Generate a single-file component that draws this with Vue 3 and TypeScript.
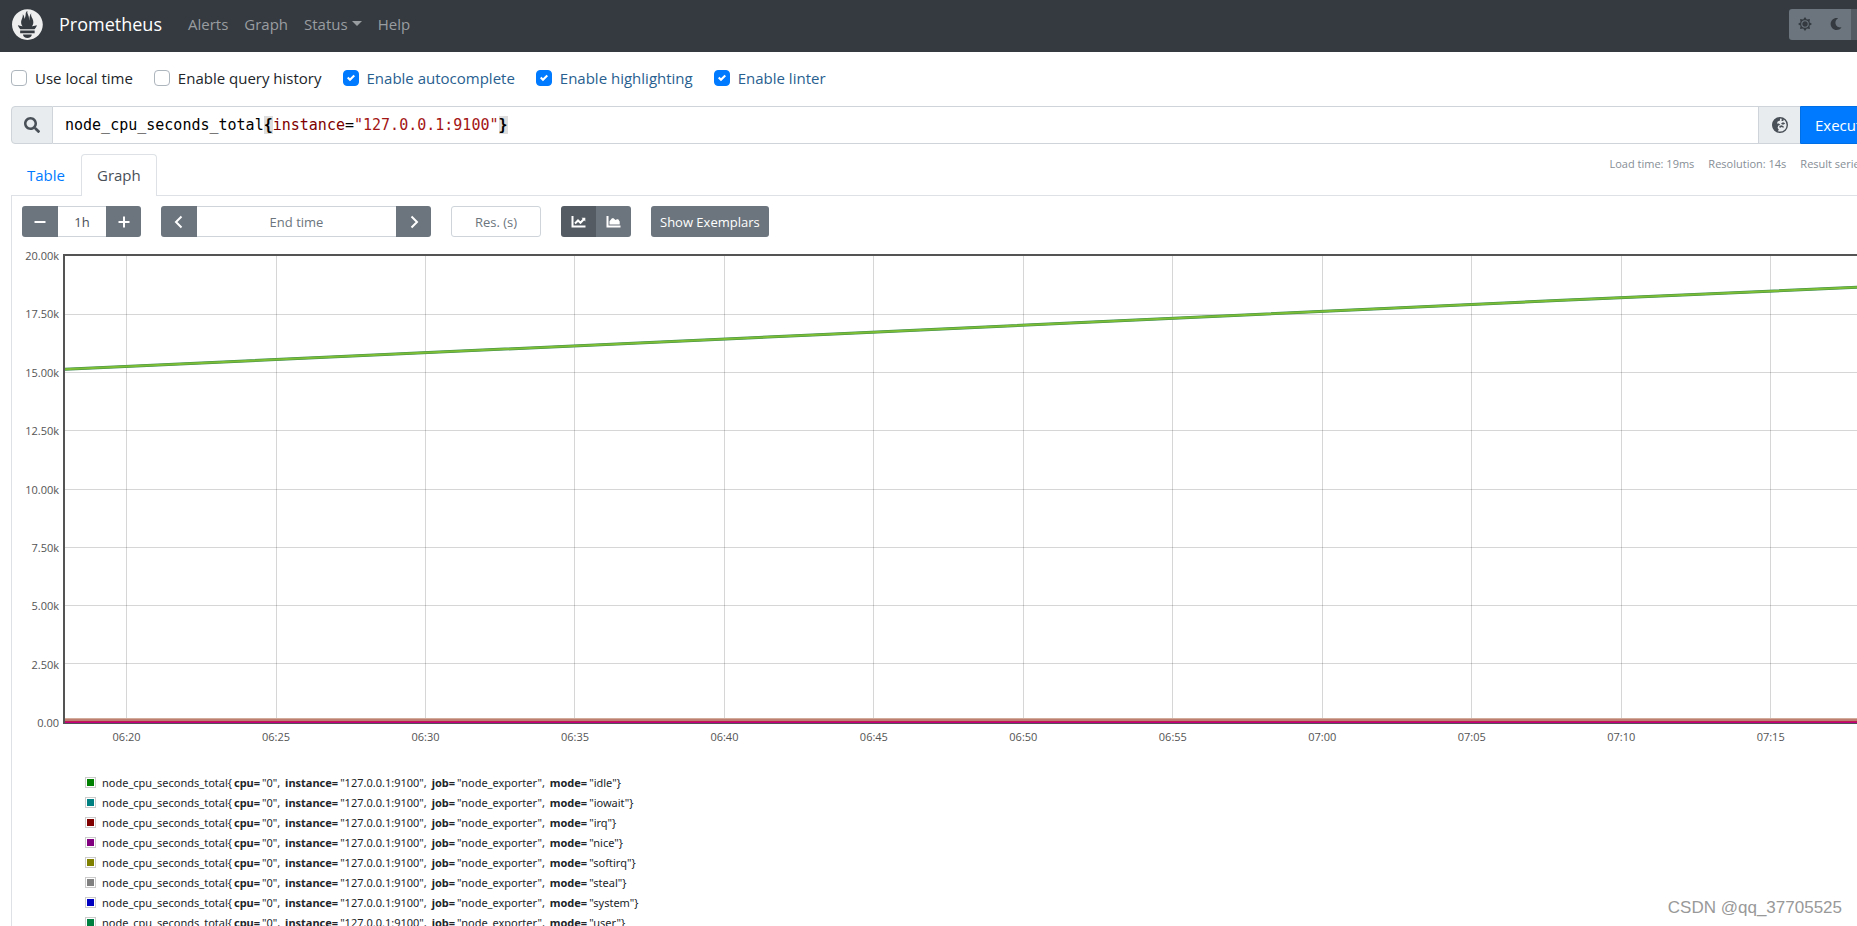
<script setup lang="ts">
import { computed, ref } from 'vue'

interface Option {
  id: string
  label: string
  checked: boolean
}
interface Series {
  mode: string
  color: string
}

const links = ['Alerts', 'Graph', 'Status', 'Help']

const options = ref<Option[]>([
  { id: 'local-time', label: 'Use local time', checked: false },
  { id: 'history', label: 'Enable query history', checked: false },
  { id: 'autocomplete', label: 'Enable autocomplete', checked: true },
  { id: 'highlighting', label: 'Enable highlighting', checked: true },
  { id: 'linter', label: 'Enable linter', checked: true },
])

const range = ref('1h')
const endTime = ref('')
const resolution = ref('')
const stats = ['Load time: 19ms', 'Resolution: 14s', 'Result series: 8']

const series: Series[] = [
  { mode: 'idle', color: '#008000' },
  { mode: 'iowait', color: '#008080' },
  { mode: 'irq', color: '#800000' },
  { mode: 'nice', color: '#800080' },
  { mode: 'softirq', color: '#808000' },
  { mode: 'steal', color: '#808080' },
  { mode: 'system', color: '#0000c0' },
  { mode: 'user', color: '#008040' },
]

// Time axis in minutes from the left edge, value axis in thousands.
const SPAN = 60.65
const FIRST_TICK = 2.06
const MAX = 20

const yTicks = Array.from({ length: 9 }, (_, i) => {
  const value = MAX - i * 2.5
  return { label: value === 0 ? '0.00' : value.toFixed(2) + 'k', pct: (i * 100) / 8 + '%' }
})
const xTicks = Array.from({ length: 12 }, (_, i) => {
  const minute = 20 + i * 5
  const hour = 6 + Math.floor(minute / 60)
  return {
    label: `0${hour}:${String(minute % 60).padStart(2, '0')}`,
    pct: ((FIRST_TICK + i * 5) / SPAN) * 100 + '%',
  }
})

const idle: [number, number][] = [
  [0, 15.14],
  [25, 16.61],
  [49.9, 18.09],
  [60, 18.66],
]
const idlePoints = computed(() =>
  idle.map(([t, v]) => `${(t / SPAN) * 1000},${((MAX - v) / MAX) * 466}`).join(' '),
)
</script>

<template>
  <div class="viewport">
    <div class="sheet">
      <nav class="navbar">
        <svg class="logo" viewBox="0 0 114 114" aria-hidden="true">
          <path
            fill="#eeeeee"
            d="M56.667,0.667C25.372,0.667,0,26.036,0,57.332c0,31.295,25.372,56.666,56.667,56.666s56.666-25.371,56.666-56.666C113.333,26.036,87.961,0.667,56.667,0.667z M56.667,106.722c-8.904,0-16.123-5.948-16.123-13.283H72.79C72.79,100.773,65.571,106.722,56.667,106.722z M83.297,89.04H30.034v-9.658h53.264V89.04z M83.106,74.411h-52.92c-0.176-0.203-0.356-0.403-0.526-0.609c-5.452-6.62-6.736-10.076-7.983-13.598c-0.021-0.116,6.611,1.355,11.314,2.413c0,0,2.42,0.56,5.958,1.205c-3.397-3.982-5.414-9.044-5.414-14.218c0-11.359,8.712-21.285,5.569-29.308c3.059,0.249,6.331,6.456,6.552,16.161c3.252-4.494,4.613-12.701,4.613-17.733c0-5.21,3.433-11.262,6.867-11.469c-3.061,5.045,0.793,9.37,4.219,20.099c1.285,4.03,1.121,10.812,2.113,15.113C63.797,33.534,65.333,20.5,71,16c-2.5,5.667,0.37,12.758,2.333,16.167c3.167,5.5,5.087,9.667,5.087,17.548c0,5.284-1.951,10.259-5.242,14.148c3.742-0.702,6.326-1.335,6.326-1.335l12.152-2.371C91.657,60.156,89.891,67.417,83.106,74.411z"
          />
        </svg>
        <a class="brand" href="#">Prometheus</a>
        <a v-for="link in links" :key="link" class="nav-link" :class="{ dropdown: link === 'Status' }" href="#">{{ link }}</a>
        <div class="themes">
          <button type="button" aria-label="Light theme">
            <svg viewBox="0 0 16 16" aria-hidden="true">
              <path fill="#343a40" d="M8 0l2.100 2.900L13.650 2.350 13.100 5.900 16 8l-2.900 2.100 .55 3.550-3.550-.55L8 16l-2.100-2.900-3.550.55L2.900 10.100 0 8l2.900-2.100L2.350 2.350 5.900 2.900z" />
              <circle cx="8" cy="8" r="3.700" fill="#343a40" stroke="#6c757d" stroke-width="1.200" />
            </svg>
          </button>
          <button type="button" aria-label="Dark theme">
            <svg viewBox="0 0 512 512" aria-hidden="true">
              <path fill="#343a40" d="M283.211 512c78.962 0 151.079-35.925 198.857-94.792 7.068-8.708-.639-21.43-11.562-19.35-124.203 23.654-238.262-71.576-238.262-196.954 0-72.222 38.662-138.635 101.498-174.394 9.686-5.512 7.25-20.197-3.756-22.23A258.156 258.156 0 0 0 283.211 0c-141.309 0-256 114.511-256 256 0 141.309 114.511 256 256 256z" />
            </svg>
          </button>
          <button type="button" class="active" aria-label="Browser theme">
            <svg viewBox="0 0 16 16" aria-hidden="true">
              <circle cx="8" cy="8" r="7" fill="none" stroke="#343a40" stroke-width="2" />
              <path fill="#343a40" d="M8 1a7 7 0 0 1 0 14z" />
            </svg>
          </button>
        </div>
      </nav>

      <main class="container">
        <div class="options">
          <div v-for="option in options" :key="option.id" class="option">
            <input :id="option.id" v-model="option.checked" type="checkbox" />
            <label :for="option.id">{{ option.label }}</label>
          </div>
        </div>

        <div class="expression">
          <span class="addon">
            <svg viewBox="0 0 512 512" aria-hidden="true">
              <path fill="#495057" d="M505 442.700L405.300 343c-4.500-4.500-10.600-7-17-7H372c27.600-35.300 44-79.700 44-128C416 93.100 322.900 0 208 0S0 93.100 0 208s93.100 208 208 208c48.300 0 92.700-16.400 128-44v16.300c0 6.400 2.500 12.500 7 17l99.700 99.700c9.400 9.400 24.600 9.400 33.900 0l28.300-28.300c9.400-9.400 9.400-24.600.1-34zM208 336c-70.700 0-128-57.200-128-128 0-70.700 57.200-128 128-128 70.700 0 128 57.200 128 128 0 70.700-57.200 128-128 128z" />
            </svg>
          </span>
          <div class="editor" role="textbox" aria-label="Expression" contenteditable="true" spellcheck="false">node_cpu_seconds_total<b>{</b><span class="label-name">instance</span>=<span class="string">"127.0.0.1:9100"</span><b>}</b></div>
          <button type="button" class="addon explorer" aria-label="Metrics explorer">
            <svg viewBox="0 0 16 16" aria-hidden="true">
              <circle cx="8" cy="8" r="7.300" fill="#e9ecef" stroke="#495057" stroke-width="1.400" />
              <path fill="#495057" d="M8 .7A7.300 7.300 0 0 0 5.500 14.900L6.800 12.600 5.600 10.900 6.200 8.800 8.300 7.700 6.900 6.500 4.900 6.600 5.700 4.600 8 3.600z" />
              <path fill="#495057" d="M9.500 2.600l1.400-.9 1 1-.8 1.200-1.500.2zM9 6.400l2-1.200 2.200 1.100-1.300 1.200-1.800.1zM7.200 8.900l2.600-.7 2.200 1.500-.6 1-1.900-.6-1.700.8z" />
            </svg>
          </button>
          <button type="button" class="execute">Execute</button>
        </div>

        <div class="tab-row">
          <div class="tabs">
            <button type="button" class="tab">Table</button>
            <button type="button" class="tab selected">Graph</button>
          </div>
          <div class="stats">
            <span v-for="stat in stats" :key="stat">{{ stat }}</span>
          </div>
        </div>

        <section class="panel">
          <form class="controls" @submit.prevent>
            <div class="group">
              <button type="button" class="dark" aria-label="Decrease range">
                <svg viewBox="0 0 14 14" aria-hidden="true"><path class="stroke" d="M1.500 7h11" /></svg>
              </button>
              <input v-model="range" class="range" aria-label="Range" />
              <button type="button" class="dark" aria-label="Increase range">
                <svg viewBox="0 0 14 14" aria-hidden="true"><path class="stroke" d="M1.500 7h11M7 1.500v11" /></svg>
              </button>
            </div>
            <div class="group">
              <button type="button" class="dark" aria-label="Earlier">
                <svg viewBox="0 0 14 14" aria-hidden="true"><path class="stroke" d="M9.500 1.500L4 7l5.500 5.500" /></svg>
              </button>
              <input v-model="endTime" class="end-time" placeholder="End time" aria-label="End time" />
              <button type="button" class="dark" aria-label="Later">
                <svg viewBox="0 0 14 14" aria-hidden="true"><path class="stroke" d="M4.500 1.500L10 7l-5.500 5.500" /></svg>
              </button>
            </div>
            <div class="group">
              <input v-model="resolution" class="resolution" placeholder="Res. (s)" aria-label="Resolution in seconds" />
            </div>
            <div class="group modes">
              <button type="button" class="dark active" aria-label="Line graph">
                <svg class="chart-icon" viewBox="0 0 15 14" aria-hidden="true">
                  <path class="stroke" d="M1.500 1v10.500h13" />
                  <path class="stroke" d="M4 8.500l3-3 2.500 2.300L13 4" />
                  <path fill="#ffffff" d="M10.500 2.800h3.800v3.800z" />
                </svg>
              </button>
              <button type="button" class="dark" aria-label="Stacked graph">
                <svg class="chart-icon" viewBox="0 0 15 14" aria-hidden="true">
                  <path class="stroke" d="M1.500 1v10.500h13" />
                  <path fill="#ffffff" d="M3.500 9.500V6.200L6 3.200h1.500L9.500 5l1.500-.8h1.200l1.500 2.300v3z" />
                </svg>
              </button>
            </div>
            <div class="group">
              <button type="button" class="dark exemplars">Show Exemplars</button>
            </div>
          </form>

          <div class="chart">
            <span v-for="tick in yTicks" :key="tick.label" class="y-label" :style="{ top: tick.pct }">{{ tick.label }}</span>
            <svg class="plot" role="img" aria-label="CPU seconds over time">
              <g class="grid">
                <line v-for="tick in yTicks.slice(1, 8)" :key="tick.label" x1="0" x2="100%" :y1="tick.pct" :y2="tick.pct" />
                <line v-for="tick in xTicks" :key="tick.label" y1="0" y2="100%" :x1="tick.pct" :x2="tick.pct" />
              </g>
              <svg width="100%" height="100%" viewBox="0 0 1000 466" preserveAspectRatio="none">
                <polyline class="idle shade" :points="idlePoints" />
                <polyline class="idle" :points="idlePoints" />
                <g shape-rendering="crispEdges">
                  <rect x="0" y="462" width="1000" height="1" fill="#d3ab9b" />
                  <rect x="0" y="463" width="1000" height="2" fill="#bd7f72" />
                  <rect x="0" y="465" width="1000" height="1" fill="#c01a50" />
                </g>
              </svg>
            </svg>
            <span v-for="tick in xTicks" :key="tick.label" class="x-label" :style="{ left: tick.pct }">{{ tick.label }}</span>
          </div>

          <ul class="legend">
            <li v-for="item in series" :key="item.mode">
              <span class="swatch"><i :style="{ background: item.color }"></i></span>
              <span>node_cpu_seconds_total{<b>cpu=</b>"0", <b>instance=</b>"127.0.0.1:9100", <b>job=</b>"node_exporter", <b>mode=</b>"{{ item.mode }}"}</span>
            </li>
          </ul>
        </section>
      </main>
    </div>
    <div class="watermark">CSDN @qq_37705525</div>
  </div>
</template>

<style>
body {
  margin: 0;
  background: #ffffff;
}
</style>

<style scoped>
* {
  box-sizing: border-box;
}
.viewport {
  position: relative;
  height: 100vh;
  overflow: hidden;
  color: #212529;
  font-family: "Open Sans", "Noto Sans", sans-serif;
  font-size: 15px;
  line-height: 24px;
}
/* The page is slightly wider than the window. */
.sheet {
  width: calc(100% + 45px);
}
button,
input {
  margin: 0;
  font: inherit;
}
button {
  display: flex;
  align-items: center;
  justify-content: center;
  cursor: pointer;
}
a {
  text-decoration: none;
}

.navbar {
  display: flex;
  align-items: center;
  height: 52px;
  padding: 0 20px 4px 12px;
  background: #343a40;
}
.logo {
  width: 31px;
  height: 31px;
  margin-right: 16px;
}
.brand {
  margin-right: 18px;
  color: #ffffff;
  font-size: 18px;
}
.nav-link {
  padding: 0 8px;
  color: #9a9da0;
}
.dropdown::after {
  content: "";
  display: inline-block;
  margin-left: 4px;
  vertical-align: 4px;
  border: 5px solid transparent;
  border-top-color: #9a9da0;
  border-bottom: 0;
}
.themes {
  display: flex;
  margin-left: auto;
}
.themes button {
  width: 31px;
  height: 31px;
  padding: 0;
  border: 0;
  background: #6c757d;
}
.themes button:first-child {
  border-radius: 3px 0 0 3px;
}
.themes button:last-child {
  border-radius: 0 3px 3px 0;
}
.themes .active {
  background: #545b62;
}
.themes svg {
  width: 14px;
  height: 14px;
}
.themes button:nth-child(2) svg {
  width: 12px;
  height: 12px;
}

.container {
  padding: 14px 11px 0;
}
.options {
  display: flex;
  gap: 21px;
}
.option {
  display: flex;
  align-items: center;
  gap: 8px;
}
.option input {
  appearance: none;
  width: 16px;
  height: 16px;
  border: 1px solid #adb5bd;
  border-radius: 4px;
  background: #ffffff;
}
.option input:checked {
  border-color: #007bff;
  background: #007bff url("data:image/svg+xml,%3csvg xmlns='http://www.w3.org/2000/svg' viewBox='0 0 8 8'%3e%3cpath fill='%23fff' d='M6.564.75l-3.59 3.612-1.538-1.55L0 4.260l2.974 2.990L8 2.193z'/%3e%3c/svg%3e") center / 8px 8px no-repeat;
}
.option input:checked + label {
  color: #286090;
}

.expression {
  display: flex;
  height: 38px;
  margin-top: 16px;
}
.addon {
  display: flex;
  align-items: center;
  justify-content: center;
  width: 42px;
  border: 1px solid #ced4da;
  border-radius: 4px 0 0 4px;
  background: #e9ecef;
}
.addon svg {
  width: 16px;
  height: 16px;
}
.editor {
  flex: 1;
  padding: 6px 12px;
  border: solid #ced4da;
  border-width: 1px 0;
  color: #000000;
  font-family: "DejaVu Sans Mono", monospace;
  white-space: pre;
  outline: 0;
}
.editor b {
  background: #dddddd;
}
.label-name {
  color: #800000;
}
.string {
  color: #a31515;
}
.explorer {
  padding: 0;
  border-right: 0;
  border-radius: 0;
}
.execute {
  justify-content: flex-start;
  width: 91px;
  padding: 0 14px;
  border: 1px solid #006fe6;
  border-radius: 0 4px 4px 0;
  background: #007bff;
  color: #ffffff;
}

.tab-row {
  display: flex;
  align-items: flex-start;
  justify-content: space-between;
  margin-top: 10px;
}
.tabs {
  display: flex;
  margin-bottom: -1px;
}
.tab {
  height: 42px;
  padding: 0 15px 2px;
  border: 1px solid transparent;
  border-bottom: 0;
  border-radius: 4px 4px 0 0;
  background: transparent;
  color: #007bff;
}
.tab.selected {
  position: relative;
  border-color: #dee2e6;
  background: #ffffff;
  color: #495057;
}
.stats {
  display: flex;
  gap: 14px;
  padding-right: 14px;
  color: #868e96;
  font-size: 11px;
  line-height: 20px;
}

.panel {
  padding: 10px;
  border: 1px solid #dee2e6;
}
.controls {
  display: flex;
  gap: 20px;
  font-size: 13px;
}
.group {
  display: flex;
  height: 31px;
}
.group input {
  min-width: 0;
  padding: 0 8px;
  border: 1px solid #ced4da;
  background: #ffffff;
  color: #495057;
  text-align: center;
}
.group input:not(:only-child) {
  border-width: 1px 0;
}
.group input::placeholder {
  color: #6c757d;
}
.group > :first-child {
  border-top-left-radius: 3px;
  border-bottom-left-radius: 3px;
}
.group > :last-child {
  border-top-right-radius: 3px;
  border-bottom-right-radius: 3px;
}
.range {
  width: 48px;
}
.end-time {
  width: 199px;
}
.resolution {
  width: 90px;
}
.dark {
  width: 35px;
  padding: 0;
  border: 0;
  background: #6c757d;
  color: #ffffff;
}
.dark:first-child {
  width: 36px;
}
.modes .dark {
  width: 35px;
}
.dark.active {
  background: #545b62;
}
.group .exemplars {
  width: auto;
  padding: 0 9px;
}
.dark svg {
  width: 14px;
  height: 14px;
}
.dark .chart-icon {
  width: 15px;
}
.stroke {
  fill: none;
  stroke: #ffffff;
  stroke-width: 2;
}

.chart {
  position: relative;
  height: 470px;
  margin: 17px 0 0 41px;
  border: 2px solid #545454;
  border-bottom: 1px solid #545454;
  box-shadow: inset 0 -1px #bf0080;
  color: #545454;
  font-size: 11px;
  line-height: 16px;
}
.plot {
  display: block;
  width: 100%;
  height: 466px;
}
.grid line {
  stroke: rgba(0, 0, 0, 0.16);
  shape-rendering: crispEdges;
}
.idle {
  fill: none;
  stroke: #7cbd35;
  stroke-width: 2;
  vector-effect: non-scaling-stroke;
}
.idle.shade {
  stroke: #3a8a4c;
  stroke-width: 3;
}
.y-label {
  position: absolute;
  right: 100%;
  margin-right: 6px;
  transform: translateY(-50%);
}
.x-label {
  position: absolute;
  top: 100%;
  margin-top: 6px;
  transform: translateX(-50%);
}

.legend {
  margin: 49px 0 0 63px;
  padding: 0;
  list-style: none;
  font-family: "Noto Sans", "Open Sans", sans-serif;
  font-size: 11px;
  line-height: 20px;
}
.legend li {
  display: flex;
  align-items: center;
  gap: 6px;
}
.legend b {
  margin: 0 2px;
}
.swatch {
  display: flex;
  width: 11px;
  height: 11px;
  margin-bottom: 2px;
  padding: 1px;
  border: 1px solid #cccccc;
}
.swatch i {
  flex: 1;
}

.watermark {
  position: absolute;
  right: 15px;
  bottom: 6px;
  color: #999999;
  font-family: "Liberation Sans", Arial, sans-serif;
  font-size: 17px;
}
</style>
